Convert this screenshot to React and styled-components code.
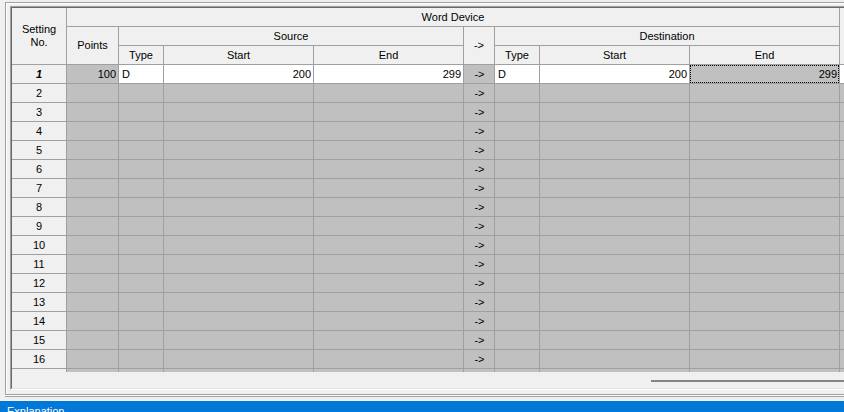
import React from "react";
import styled, { createGlobalStyle } from "styled-components";

const GlobalStyle = createGlobalStyle`
  html, body {
    margin: 0;
    padding: 0;
  }
  body {
    background: #f0f0f0;
    font-family: "Liberation Sans", Arial, sans-serif;
    font-size: 11px;
    color: #000;
  }
`;

const ROW_COUNT = 16;

// one entry per body column after the row header
const rowCells = (n) => {
  const first = n === 1;
  const tone = first ? "edit" : "off";
  return [
    { key: "points", text: first ? "100" : "", align: "end", tone: "off" },
    { key: "srcType", text: first ? "D" : "", align: "start", tone },
    { key: "srcStart", text: first ? "200" : "", align: "end", tone },
    { key: "srcEnd", text: first ? "299" : "", align: "end", tone },
    { key: "arrow", text: n ? "->" : "", align: "center", tone: "off" },
    { key: "dstType", text: first ? "D" : "", align: "start", tone },
    { key: "dstStart", text: first ? "200" : "", align: "end", tone },
    { key: "dstEnd", text: first ? "299" : "", align: "end", tone: "off", focus: first },
    { key: "next", text: "", align: "start", tone },
  ];
};

const Row = ({ n }) => (
  <>
    <RowHead $current={n === 1}>{n || ""}</RowHead>
    {rowCells(n).map((c) => (
      <Cell key={c.key} $align={c.align} $tone={c.tone} $focus={c.focus}>
        {c.text}
      </Cell>
    ))}
  </>
);

export default function App() {
  const rows = Array.from({ length: ROW_COUNT }, (_, i) => i + 1);

  return (
    <Screen>
      <GlobalStyle />
      <Group>
        <GridView>
          <GridInner>
            <Viewport>
              <Table>
                <HeadCell $col="1" $row="1 / span 3">
                  Setting
                  <br />
                  No.
                </HeadCell>
                <HeadCell $col="2 / span 8" $row="1">Word Device</HeadCell>
                <HeadCell $col="10" $row="1 / span 3" />
                <HeadCell $col="2" $row="2 / span 2">Points</HeadCell>
                <HeadCell $col="3 / span 3" $row="2">Source</HeadCell>
                <HeadCell $col="6" $row="2 / span 2">-&gt;</HeadCell>
                <HeadCell $col="7 / span 3" $row="2">Destination</HeadCell>
                <HeadCell $col="3" $row="3">Type</HeadCell>
                <HeadCell $col="4" $row="3">Start</HeadCell>
                <HeadCell $col="5" $row="3">End</HeadCell>
                <HeadCell $col="7" $row="3">Type</HeadCell>
                <HeadCell $col="8" $row="3">Start</HeadCell>
                <HeadCell $col="9" $row="3">End</HeadCell>

                {rows.map((n) => (
                  <Row key={n} n={n} />
                ))}
                {/* top edge of the next row, scrolled out of view */}
                <Row n={0} />
              </Table>
            </Viewport>
            <HScroll>
              <Thumb />
            </HScroll>
          </GridInner>
        </GridView>
      </Group>
      <Rule />
      <ExplainBar>Explanation</ExplainBar>
    </Screen>
  );
}

const Screen = styled.div`
  width: 844px;
  height: 412px;
  overflow: hidden;
  box-sizing: border-box;
  padding-top: 2px;
  background: #f0f0f0;
`;

const Group = styled.div`
  margin-left: 5px;
  width: 1100px;
  padding: 3px 0 4px 4px;
  border-top: 1px solid #a0a0a0;
  border-left: 1px solid #a0a0a0;
  border-bottom: 1px solid #a0a0a0;
  box-shadow: inset 1px 1px 0 #fff;
`;

const GridView = styled.div`
  border-style: solid;
  border-width: 1px;
  border-color: #a0a0a0 #fff #fff #a0a0a0;
`;

const GridInner = styled.div`
  border-style: solid;
  border-width: 1px;
  border-color: #696969 #e3e3e3 #e3e3e3 #696969;
  background: #f0f0f0;
`;

const Viewport = styled.div`
  height: 364px;
  overflow: hidden;
`;

const Table = styled.div`
  display: grid;
  grid-template-columns: 54px 51px 44px 149px 149px 30px 44px 149px 149px 120px;
  grid-template-rows: repeat(3, 18px);
  grid-auto-rows: 18px;
  gap: 1px;
  width: max-content;
  background: #a0a0a0;
`;

const HeadCell = styled.div`
  grid-column: ${(p) => p.$col};
  grid-row: ${(p) => p.$row};
  display: flex;
  align-items: center;
  justify-content: center;
  text-align: center;
  line-height: 13px;
  background: #f0f0f0;
`;

const RowHead = styled.div`
  display: flex;
  align-items: center;
  justify-content: center;
  background: #f0f0f0;
  font-weight: ${(p) => (p.$current ? 700 : 400)};
  font-style: ${(p) => (p.$current ? "italic" : "normal")};
`;

const alignMap = { start: "flex-start", center: "center", end: "flex-end" };

const Cell = styled.div`
  display: flex;
  align-items: center;
  justify-content: ${(p) => alignMap[p.$align]};
  padding: 0 ${(p) => (p.$focus ? 1 : 2)}px 0 ${(p) => (p.$focus ? 2 : 3)}px;
  background: ${(p) => (p.$tone === "edit" ? "#fff" : "#c0c0c0")};
  border: ${(p) => (p.$focus ? "1px dotted #000" : "none")};
  white-space: nowrap;
  overflow: hidden;
`;

const HScroll = styled.div`
  height: 16px;
  box-sizing: border-box;
  padding-top: 8px;
  background: #f0f0f0;
`;

const Thumb = styled.div`
  margin-left: 639px;
  width: 400px;
  height: 2px;
  background: #858585;
`;

const Rule = styled.div`
  margin-left: 5px;
  border-top: 1px solid #fff;
  border-bottom: 1px solid #a0a0a0;
`;

const ExplainBar = styled.div`
  margin-top: 4px;
  height: 24px;
  padding: 3px 7px;
  background: #0078d7;
  color: #fff;
  line-height: 14px;
`;
